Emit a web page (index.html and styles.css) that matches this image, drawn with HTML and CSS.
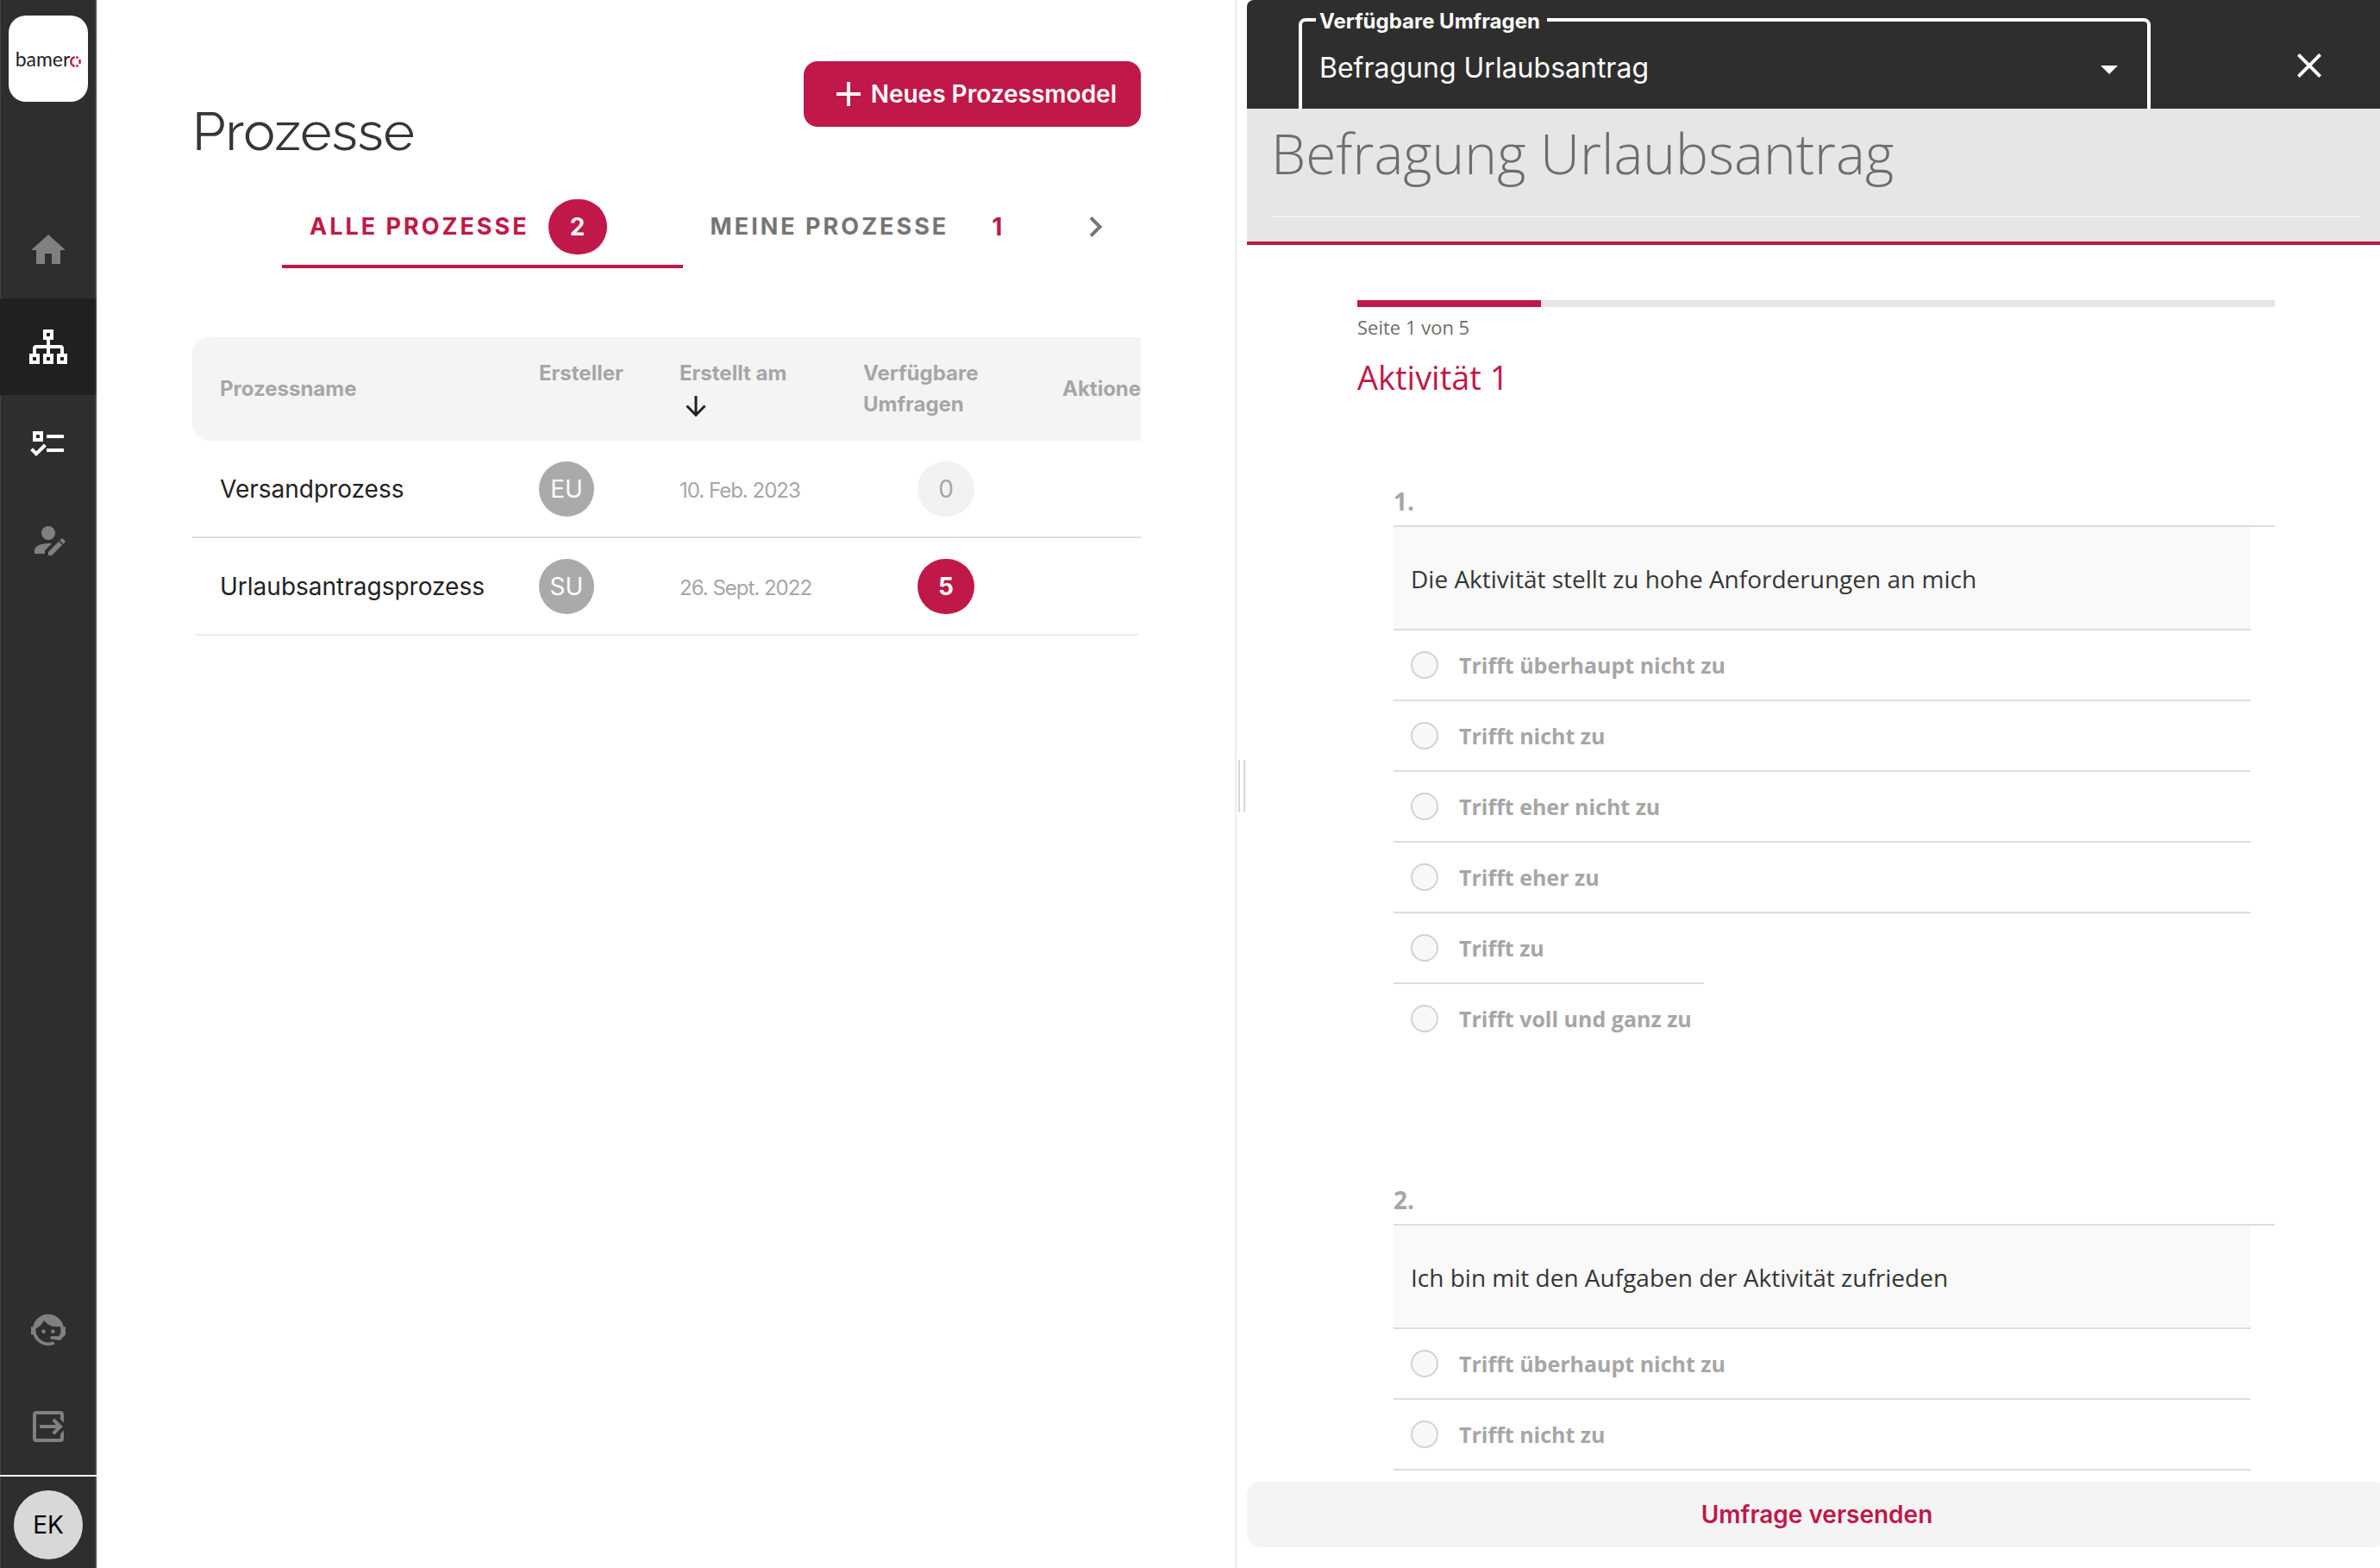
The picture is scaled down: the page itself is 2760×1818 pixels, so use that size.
FILE: index.html
```html
<!DOCTYPE html>
<html lang="de">
<head>
<meta charset="utf-8">
<meta name="viewport" content="width=device-width, initial-scale=1">
<title>Prozesse – bamero</title>
<link rel="stylesheet" href="styles.css">
</head>
<body>
<div class="app">
  <nav class="sidebar" aria-label="Hauptnavigation">
    <a class="logo" href="#" aria-label="bamero"><span>bamer</span><svg viewBox="0 0 12 12" aria-hidden="true"><path d="M5.300 1.200A4.850 4.850 0 0 0 5.300 10.800"/><path d="M6.700 1.200A4.850 4.850 0 0 1 8.900 2.100M10.200 3.800A4.850 4.850 0 0 1 10.200 8.200M8.900 9.900A4.850 4.850 0 0 1 6.700 10.800"/></svg></a>
    <div class="nav-main">
      <a class="nav-item" href="#" aria-label="Start"><svg class="icon" viewBox="0 0 24 24"><path d="M10 20v-6h4v6h5v-8h3L12 3 2 12h3v8z"/></svg></a>
      <a class="nav-item nav-item-active" href="#" aria-label="Prozesse"><svg class="icon icon-line" viewBox="0 0 24 24"><path d="M10 3h4v4h-4zM2 17h4v4H2zM10 17h4v4h-4zM18 17h4v4h-4zM12 7v10M4 17v-4a1 1 0 0 1 1-1h14a1 1 0 0 1 1 1v4"/></svg></a>
      <a class="nav-item nav-item-light" href="#" aria-label="Aufgaben"><svg class="icon icon-line" viewBox="0 0 24 24"><path d="M4 6h4v4H4zM11 8h10M11 16h10M2.300 15.300l2.700 2.800 5.200-5.100"/></svg></a>
      <a class="nav-item" href="#" aria-label="Benutzer bearbeiten"><svg class="icon" viewBox="0 0 24 24"><path d="M21.7,13.35L20.7,14.35L18.65,12.3L19.65,11.3C19.86,11.09 20.21,11.09 20.42,11.3L21.7,12.58C21.91,12.79 21.91,13.14 21.7,13.35M12,18.94L18.06,12.88L20.11,14.93L14.06,21H12V18.94M12,14C7.58,14 4,15.79 4,18V20H10V18.11L14,14.11C13.34,14.03 12.67,14 12,14M12,4A4,4 0 0,0 8,8A4,4 0 0,0 12,12A4,4 0 0,0 16,8A4,4 0 0,0 12,4Z"/></svg></a>
    </div>
    <div class="nav-bottom">
      <a class="nav-item" href="#" aria-label="Support"><svg class="icon" viewBox="0 0 24 24"><path d="M18.72,14.76C19.07,13.91 19.26,13 19.26,12C19.26,11.28 19.15,10.59 18.96,9.95C18.31,10.1 17.63,10.18 16.92,10.18C13.86,10.18 11.15,8.67 9.5,6.34C8.61,8.5 6.91,10.26 4.77,11.22C4.73,11.47 4.73,11.74 4.73,12A7.27,7.27 0 0,0 12,19.27C13.05,19.27 14.06,19.04 14.97,18.63C15.54,19.72 15.8,20.26 15.78,20.26C14.14,20.81 12.87,21.08 12,21.08C9.58,21.08 7.27,20.13 5.57,18.42C4.53,17.38 3.76,16.11 3.33,14.73H2V10.18H3.09C3.93,6.04 7.6,2.92 12,2.92C14.4,2.92 16.71,3.87 18.42,5.58C19.69,6.84 20.54,8.45 20.89,10.18H22V14.73H21.94L18.94,18L13.25,17.3V15.63H17.91L18.72,14.76M9.27,11.77C9.57,11.77 9.86,11.89 10.07,12.11C10.28,12.32 10.4,12.61 10.4,12.91C10.4,13.21 10.28,13.5 10.07,13.71C9.86,13.92 9.57,14.04 9.27,14.04C8.64,14.04 8.13,13.54 8.13,12.91C8.13,12.28 8.64,11.77 9.27,11.77M14.72,11.77C15.35,11.77 15.85,12.28 15.85,12.91C15.85,13.54 15.35,14.04 14.72,14.04C14.09,14.04 13.58,13.54 13.58,12.91A1.14,1.14 0 0,1 14.72,11.77Z"/></svg></a>
      <a class="nav-item" href="#" aria-label="Abmelden"><svg class="icon" viewBox="0 0 24 24"><path d="M21 9.7l-2-1.9V5H5v14h14v-2.8l2-1.9V19a2 2 0 0 1-2 2H5a2 2 0 0 1-2-2V5a2 2 0 0 1 2-2h14a2 2 0 0 1 2 2zM7 11h9.5l-2.3-2.3 1.4-1.5L20.4 12l-4.8 4.9-1.4-1.5 2.3-2.4H7z"/></svg></a>
      <div class="user"><button class="user-avatar" type="button">EK</button></div>
    </div>
  </nav>

  <main class="processes">
    <header class="page-header">
      <h1>Prozesse</h1>
      <button class="primary" type="button"><svg viewBox="0 0 28 28" aria-hidden="true"><path d="M14 0v28M0 14h28"/></svg>Neues Prozessmodel</button>
    </header>
    <div class="tab-bar">
      <div class="tabs" role="tablist">
        <button class="tab tab-active" type="button" role="tab" aria-selected="true">ALLE PROZESSE<span class="count">2</span></button>
        <button class="tab" type="button" role="tab" aria-selected="false">MEINE PROZESSE<span class="count">1</span></button>
      </div>
      <button class="tab-next" type="button" aria-label="Weitere"><svg viewBox="0 0 16 24" aria-hidden="true"><path d="M2 1.500l10.500 10.500L2 22.500"/></svg></button>
    </div>
    <div class="table-wrap">
      <table>
        <colgroup><col class="col-name"><col class="col-creator"><col class="col-date"><col class="col-surveys"><col class="col-actions"></colgroup>
        <thead>
          <tr>
            <th>Prozessname</th>
            <th class="top">Ersteller</th>
            <th class="top">Erstellt am<svg class="sort" viewBox="0 0 24 24" aria-hidden="true"><path d="M12 0v22M1.500 11.500L12 22.200l10.500-10.700"/></svg></th>
            <th class="top">Verfügbare<br>Umfragen</th>
            <th>Aktionen</th>
          </tr>
        </thead>
        <tbody>
          <tr><td>Versandprozess</td><td><span class="avatar">EU</span></td><td class="date">10. Feb. 2023</td><td><span class="badge">0</span></td><td></td></tr>
          <tr><td>Urlaubsantragsprozess</td><td><span class="avatar">SU</span></td><td class="date">26. Sept. 2022</td><td><span class="badge badge-filled">5</span></td><td></td></tr>
        </tbody>
      </table>
    </div>
  </main>

  <div class="splitter" role="separator" aria-orientation="vertical"><span></span></div>

  <section class="survey" aria-label="Umfrage">
    <header class="survey-bar">
      <fieldset class="picker">
        <legend><label for="survey">Verfügbare Umfragen</label></legend>
        <div class="picker-field">
          <select id="survey"><option>Befragung Urlaubsantrag</option></select>
          <svg viewBox="0 0 20 10" aria-hidden="true"><path d="M0 0h20L10 10z"/></svg>
        </div>
      </fieldset>
      <button class="close" type="button" aria-label="Schließen"><svg viewBox="0 0 24 24"><path d="M19 6.410L17.590 5 12 10.590 6.410 5 5 6.410 10.590 12 5 17.590 6.410 19 12 13.410 17.590 19 19 17.590 13.410 12z"/></svg></button>
    </header>
    <div class="survey-title"><h2>Befragung Urlaubsantrag</h2></div>
    <div class="survey-body">
      <div class="progress"><div class="progress-fill" style="width:20%"></div></div>
      <p class="page-count">Seite 1 von 5</p>
      <h3>Aktivität 1</h3>

      <section class="question">
        <h4 class="number">1.</h4>
        <p class="prompt" id="q1">Die Aktivität stellt zu hohe Anforderungen an mich</p>
        <ul class="options" role="radiogroup" aria-labelledby="q1">
          <li><label><input type="radio" name="q1">Trifft überhaupt nicht zu</label></li>
          <li><label><input type="radio" name="q1">Trifft nicht zu</label></li>
          <li><label><input type="radio" name="q1">Trifft eher nicht zu</label></li>
          <li><label><input type="radio" name="q1">Trifft eher zu</label></li>
          <li class="open"><label><input type="radio" name="q1">Trifft zu</label></li>
          <li class="last"><label><input type="radio" name="q1">Trifft voll und ganz zu</label></li>
        </ul>
      </section>

      <section class="question">
        <h4 class="number">2.</h4>
        <p class="prompt" id="q2">Ich bin mit den Aufgaben der Aktivität zufrieden</p>
        <ul class="options" role="radiogroup" aria-labelledby="q2">
          <li><label><input type="radio" name="q2">Trifft überhaupt nicht zu</label></li>
          <li><label><input type="radio" name="q2">Trifft nicht zu</label></li>
        </ul>
      </section>
    </div>
    <button class="send" type="button">Umfrage versenden</button>
  </section>
</div>
</body>
</html>
```

FILE: styles.css
```css
:root {
  --accent: #c01848;
  --dark: #2e2e2e;
  --muted: #a6a6a6;
  --line: #dddddd;
}

* { box-sizing: border-box; }

body {
  margin: 0;
  background: #fff;
  color: #222;
  font: 400 28px/36px Inter, sans-serif;
}

h1, h2, h3, h4, p, ul { margin: 0; padding: 0; }
ul { list-style: none; }
svg { display: block; fill: currentColor; }

button {
  border: 0;
  padding: 0;
  background: none;
  color: inherit;
  font: inherit;
}

.app {
  display: grid;
  grid-template-columns: 112px minmax(0, 1320fr) 14px minmax(0, 1314fr);
  height: 100vh;
  overflow: hidden;
}

/* Sidebar */
.sidebar {
  display: flex;
  flex-direction: column;
  background: var(--dark);
  box-shadow: inset 1px 0 #444, inset -2px 0 #484848;
  color: #808080;
}

.logo {
  display: flex;
  align-items: center;
  justify-content: center;
  height: 100px;
  margin: 18px 10px 116px;
  border-radius: 20px;
  background: #fff;
  color: #222;
  font: 400 23px/28px Lato, sans-serif;
  text-decoration: none;
}

.logo svg {
  flex: none;
  width: 13px;
  height: 13px;
  margin-top: 6px;
  fill: none;
  stroke: var(--accent);
  stroke-width: 2.300;
}

.nav-item {
  display: flex;
  align-items: center;
  justify-content: center;
  height: 112px;
  color: inherit;
}

.nav-item-active {
  background: #202020;
  box-shadow: inset -2px 0 #363636;
  color: #fff;
}

.nav-item-light { color: #fff; }
.nav-bottom { margin-top: auto; }
.icon { width: 48px; height: 48px; }

.icon-line {
  fill: none;
  stroke: currentColor;
  stroke-width: 2;
}

.user {
  padding: 16px 16px 10px;
  border-top: 2px solid #fff;
}

.user-avatar {
  width: 80px;
  height: 80px;
  border-radius: 50%;
  background: #d8d8d8;
  color: #000;
}

/* Process list */
.processes { padding: 71px 109px 0 111px; }

.page-header {
  display: flex;
  align-items: flex-start;
  justify-content: space-between;
}

h1 {
  margin-top: 42px;
  color: #363636;
  font: 400 62px/80px Raleway, Lato, sans-serif;
}

.primary {
  display: flex;
  align-items: center;
  gap: 12px;
  height: 76px;
  padding: 0 28px 0 38px;
  border-radius: 16px;
  background: var(--accent);
  color: #fff;
  font-weight: 600;
}

.primary svg {
  width: 28px;
  height: 28px;
  stroke: currentColor;
  stroke-width: 4;
}

.tab-bar {
  display: flex;
  margin-top: 22px;
  padding-left: 104px;
}

.tabs {
  display: flex;
  flex: 1;
  overflow: hidden;
}

.tab {
  display: flex;
  flex: none;
  align-items: center;
  gap: 22px;
  height: 96px;
  padding: 0 88px 0 32px;
  border: solid transparent;
  border-width: 4px 0;
  color: #757575;
  font-size: 27px;
  font-weight: 700;
  letter-spacing: 3px;
}

.tab-active {
  border-bottom-color: var(--accent);
  color: var(--accent);
}

.count {
  width: 68px;
  border-radius: 32px;
  color: var(--accent);
  font-size: 28px;
  line-height: 64px;
  letter-spacing: 0;
  text-align: center;
}

.tab-active .count {
  background: var(--accent);
  color: #f4f4f4;
}

.tab-next {
  display: flex;
  flex: none;
  align-items: center;
  justify-content: center;
  width: 104px;
  color: #757575;
}

.tab-next svg {
  width: 16px;
  height: 24px;
  fill: none;
  stroke: currentColor;
  stroke-width: 4;
}

.table-wrap {
  margin-top: 80px;
  overflow: hidden;
  border-radius: 0 0 6px 6px;
}

table {
  width: 1160px;
  border-spacing: 0;
  table-layout: fixed;
}

.col-name { width: 402px; }
.col-creator { width: 163px; }
.col-date { width: 213px; }
.col-surveys { width: 231px; }

th {
  height: 120px;
  padding: 0;
  background: #f4f4f4;
  color: var(--muted);
  font-size: 24px;
  font-weight: 700;
  text-align: left;
}

th:first-child { border-radius: 20px 0 0 20px; }
th:first-child, td:first-child { padding-left: 32px; }

.top {
  padding-top: 24px;
  vertical-align: top;
}

.sort {
  width: 24px;
  height: 24px;
  margin: 8px 0 0 7px;
  fill: none;
  stroke: #222;
  stroke-width: 3;
}

td {
  height: 113px;
  padding: 0;
  border-bottom: 2px solid var(--line);
}

tr:last-child td { border-color: #eee; }

.date {
  padding-top: 4px;
  color: var(--muted);
  font-size: 24px;
  letter-spacing: -1px;
}

.avatar, .badge {
  display: block;
  width: 64px;
  border-radius: 32px;
  background: #aaa;
  color: #fff;
  line-height: 64px;
  text-align: center;
}

.badge {
  width: 66px;
  margin-left: 63px;
  background: #f2f2f2;
  color: var(--muted);
}

.badge-filled {
  background: var(--accent);
  color: #fff;
  font-weight: 700;
}

/* Splitter */
.splitter {
  display: flex;
  align-items: center;
  padding: 4px 0 0 2px;
  border-left: 2px solid #eee;
}

.splitter span {
  width: 8px;
  height: 60px;
  border: solid #d6d6d6;
  border-width: 0 2px;
}

/* Survey panel */
.survey {
  display: flex;
  flex-direction: column;
  min-height: 0;
  color: #363636;
  font: 400 28px/36px "Open Sans", sans-serif;
}

.survey-bar {
  display: flex;
  flex: none;
  align-items: flex-start;
  height: 126px;
  padding: 5px 0 0 60px;
  overflow: hidden;
  border-top-left-radius: 8px;
  background: var(--dark);
  color: #fff;
  font-family: Inter, sans-serif;
}

.picker {
  flex: 1;
  min-width: 0;
  margin: 0 102px 0 0;
  padding: 0 16px 20px;
  border: 4px solid #fff;
  border-radius: 8px;
}

.picker legend {
  padding: 4px 8px 0 4px;
  font-size: 24px;
  font-weight: 700;
  line-height: 32px;
}

.picker-field {
  display: grid;
  align-items: center;
}

.picker-field > * { grid-area: 1 / 1; }

.picker select {
  width: 100%;
  height: 76px;
  padding: 0 64px 0 4px;
  border: 0;
  appearance: none;
  background: var(--dark);
  color: #fff;
  font: 400 32px/40px Inter, sans-serif;
}

.picker-field svg {
  justify-self: end;
  width: 20px;
  height: 10px;
  margin: 4px 18px 0 0;
  pointer-events: none;
}

.close {
  display: flex;
  flex: none;
  align-items: center;
  justify-content: center;
  width: 164px;
  height: 142px;
}

.close svg { width: 48px; height: 48px; }

.survey-title {
  flex: none;
  padding: 6px 22px 28px 28px;
  border-bottom: 4px solid var(--accent);
  background: #e6e6e6;
}

h2 {
  padding-bottom: 26px;
  border-bottom: 2px solid #f2f2f2;
  color: #6d6d6d;
  font-size: 64px;
  font-weight: 300;
  line-height: 92px;
}

.survey-body {
  flex: 1;
  min-height: 0;
  padding: 64px 122px 0 128px;
  overflow: hidden;
}

.progress {
  height: 8px;
  background: #e6e6e6;
}

.progress-fill {
  height: 100%;
  background: var(--accent);
}

.page-count {
  margin-top: 7px;
  color: #6d6d6d;
  font-size: 22px;
  line-height: 32px;
}

h3 {
  margin-top: 16px;
  color: var(--accent);
  font-size: 38px;
  font-weight: 400;
  line-height: 52px;
}

.question {
  padding: 100px 0 52px 42px;
}

.number {
  padding-bottom: 10px;
  border-bottom: 2px solid var(--line);
  color: var(--muted);
  font-size: 28px;
  font-weight: 700;
}

.prompt, .options { margin-right: 28px; }

.prompt {
  padding: 42px 20px 40px;
  border-bottom: 2px solid var(--line);
  background: #f9f9f9;
}

.options li { border-bottom: 2px solid var(--line); }

.options label {
  display: flex;
  align-items: center;
  gap: 24px;
  height: 80px;
  padding: 0 14px 0 20px;
  color: var(--muted);
  font-size: 25px;
  font-weight: 700;
}

.options input {
  width: 32px;
  height: 32px;
  margin: 0;
  border: 2px solid #d2d2d2;
  border-radius: 50%;
  appearance: none;
  background: #f8f8f8;
}

.options input:checked { background: var(--accent); }
.options li.open { border: 0; }

.options li.last {
  width: fit-content;
  border-top: 2px solid var(--line);
  border-bottom: 0;
}

.send {
  flex: none;
  height: 76px;
  margin: 0 -8px 24px 0;
  border-radius: 16px;
  background: #f4f4f4;
  color: var(--accent);
  font: 600 28px/36px Inter, sans-serif;
}
```
